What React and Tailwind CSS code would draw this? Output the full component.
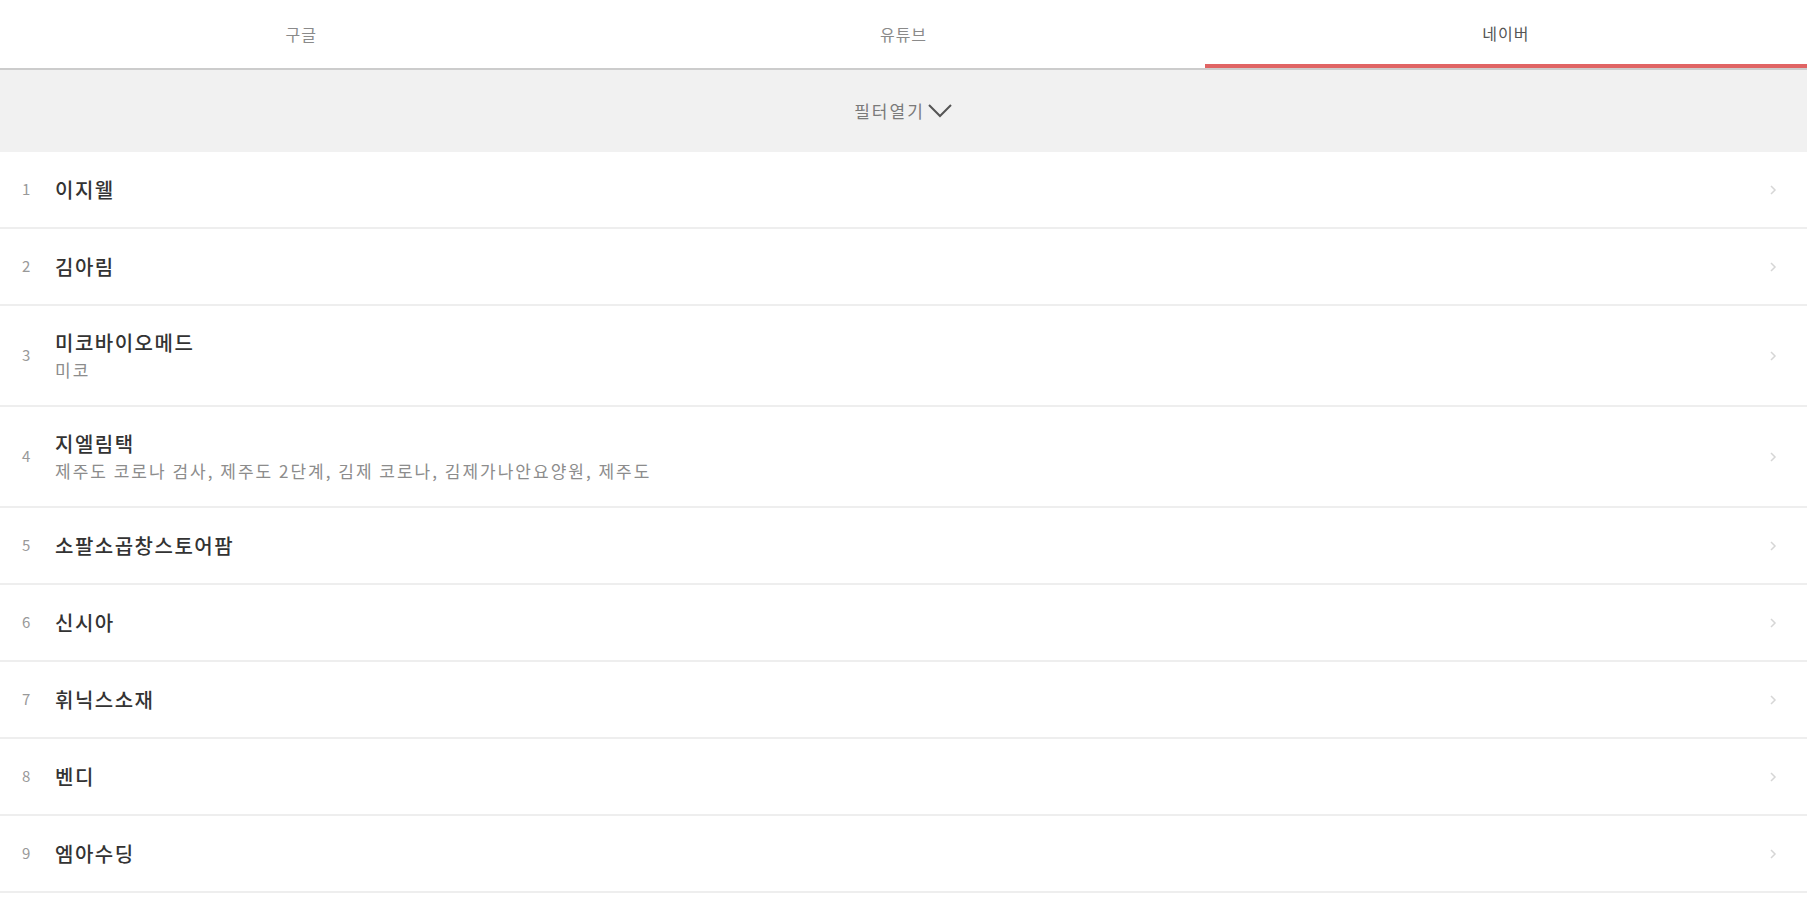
import React, { useState } from "react";

const tabs = ["구글", "유튜브", "네이버"];

const rows = [
  { rank: 1, name: "이지웰" },
  { rank: 2, name: "김아림" },
  { rank: 3, name: "미코바이오메드", sub: "미코" },
  {
    rank: 4,
    name: "지엘림택",
    sub: "제주도 코로나 검사, 제주도 2단계, 김제 코로나, 김제가나안요양원, 제주도",
  },
  { rank: 5, name: "소팔소곱창스토어팜" },
  { rank: 6, name: "신시아" },
  { rank: 7, name: "휘닉스소재" },
  { rank: 8, name: "벤디" },
  { rank: 9, name: "엠아수딩" },
];

const App = () => {
  const [active, setActive] = useState(2);
  const [filterOpen, setFilterOpen] = useState(false);

  return (
    <div className="min-h-screen bg-white font-['Noto_Sans_CJK_KR',sans-serif]">
      {/* tabs */}
      <div className="flex border-b-2 border-[#cccccc]">
        {tabs.map((tab, i) => (
          <button
            key={tab}
            onClick={() => setActive(i)}
            className={`flex-1 h-[68px] flex items-center justify-center text-[16px] tracking-[1px] ${
              active === i
                ? "text-[#555555] border-b-4 border-[#e06464] pt-[2px]"
                : "text-[#8a8a8a]"
            }`}
          >
            {tab}
          </button>
        ))}
      </div>

      {/* filter */}
      <button
        onClick={() => setFilterOpen(!filterOpen)}
        className="w-full h-[82px] bg-[#f1f1f1] flex items-center justify-center gap-[2px] text-[17px] tracking-[2px] text-[#7a7a7a]"
      >
        필터열기
        <svg width="26" height="16" viewBox="0 0 26 16" fill="none">
          <path d="M2 2l11 11L24 2" stroke="#555" strokeWidth="2" />
        </svg>
      </button>

      {/* list */}
      <ul>
        {rows.map((row) => (
          <li
            key={row.rank}
            className={`flex items-center pl-[22px] pr-[20px] border-b-2 border-[#eeeeee] ${
              row.sub ? "h-[101px]" : "h-[77px]"
            }`}
          >
            <span className="w-[33px] text-[15px] text-[#999999]">{row.rank}</span>
            <div className="flex-1 flex flex-col">
              <span className="text-[20px] leading-[28px] tracking-[1.5px] text-[#333333] font-medium">
                {row.name}
              </span>
              {row.sub && (
                <span className="text-[17px] leading-[26px] tracking-[2px] text-[#8c8c8c]">{row.sub}</span>
              )}
            </div>
            <svg width="8" height="12" viewBox="0 0 8 12" fill="none" className="mr-[10px]">
              <path d="M2 2l4 4-4 4" stroke="#d6d6d6" strokeWidth="1.5" />
            </svg>
          </li>
        ))}
      </ul>
    </div>
  );
};

export default App;
